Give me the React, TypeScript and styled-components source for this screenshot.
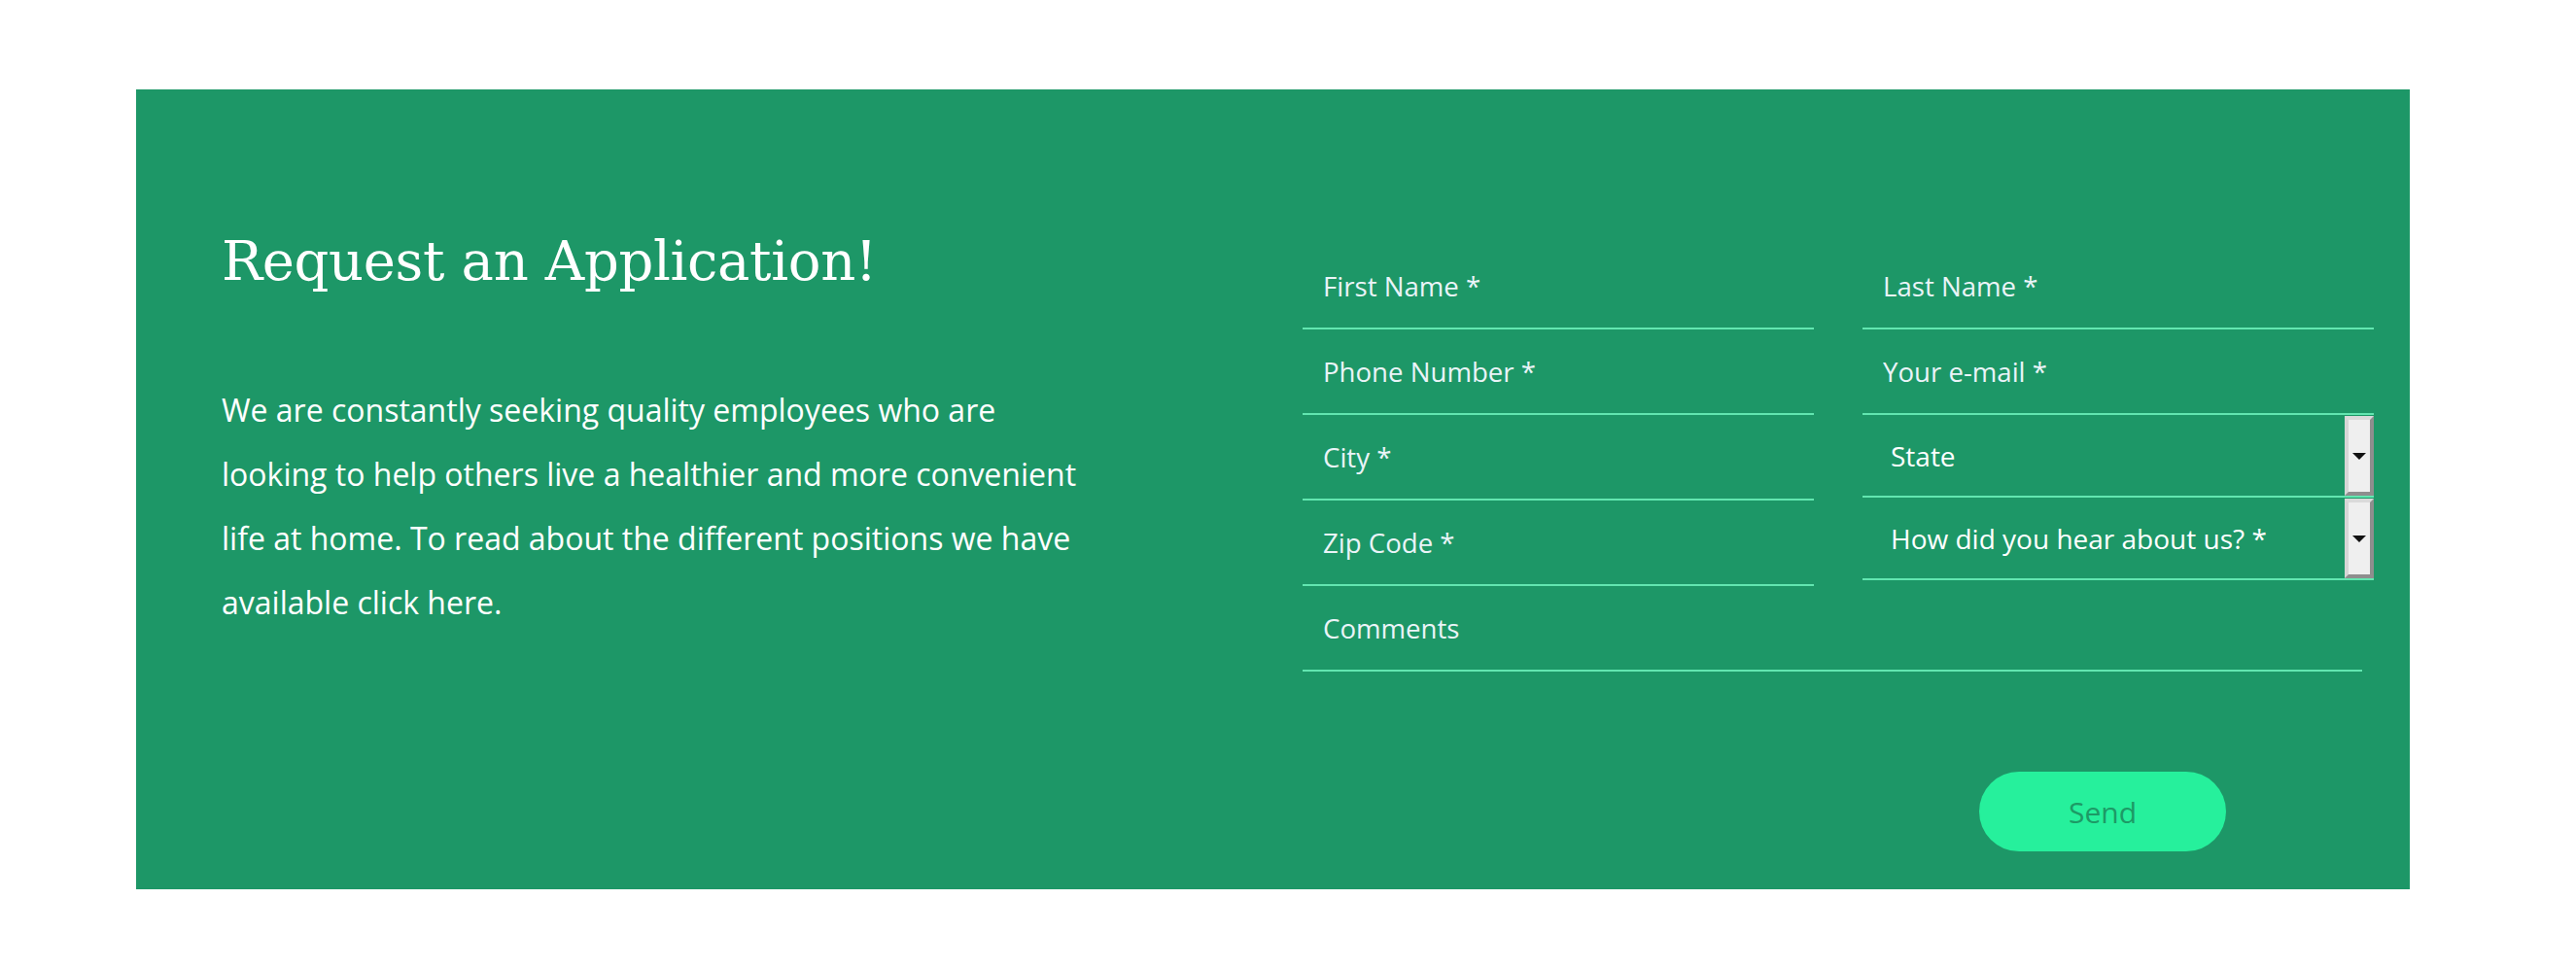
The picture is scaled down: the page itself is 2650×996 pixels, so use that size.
import styled, { createGlobalStyle } from 'styled-components'

const GlobalStyle = createGlobalStyle`
  body {
    margin: 0;
    background: #ffffff;
    font-family: "Open Sans", "Liberation Sans", sans-serif;
  }
`

const Page = styled.div`
  padding: 92px 0 0 140px;
`

const Panel = styled.section`
  width: 2339px;
  height: 823px;
  box-sizing: border-box;
  background: #1d9767;
  display: flex;
  padding: 0 37px 0 88px;
`

const Intro = styled.div`
  flex: 0 0 1112px;
  padding-top: 149px;
`

const Heading = styled.h2`
  margin: 0;
  font-family: "DejaVu Serif", "Liberation Serif", serif;
  font-weight: 400;
  font-size: 56px;
  line-height: 1;
  letter-spacing: -0.35px;
  color: #ffffff;
`

const Text = styled.p`
  margin: 92px 0 0;
  max-width: 905px;
  font-size: 32px;
  line-height: 66px;
  color: #ffffff;
`

const Form = styled.form`
  flex: 0 0 1102px;
  padding-top: 159px;
  display: flex;
  flex-direction: column;
`

const Columns = styled.div`
  display: grid;
  grid-template-columns: 526px 526px;
  column-gap: 50px;
  align-items: start;
`

const Column = styled.div`
  display: flex;
  flex-direction: column;
`

const Field = styled.input<{ $wide?: boolean }>`
  box-sizing: border-box;
  width: ${p => (p.$wide ? '1090px' : '100%')};
  height: 88px;
  padding: 0 0 0 21px;
  background: transparent;
  border: none;
  border-bottom: 2px solid #62e6b0;
  font-family: "Open Sans", "Liberation Sans", sans-serif;
  font-size: 27.6px;
  color: #ffffff;
  outline: none;
  &::placeholder {
    color: #eaf4f8;
    opacity: 1;
  }
`

const SelectRow = styled.div`
  display: flex;
  height: 85px;
  box-sizing: border-box;
  border-bottom: 2px solid #62e6b0;
`

const Select = styled.select`
  flex: 1;
  appearance: none;
  background: transparent;
  border: none;
  padding: 0 0 0 29px;
  font-family: "Open Sans", "Liberation Sans", sans-serif;
  font-size: 28px;
  color: #ffffff;
  outline: none;
  option {
    color: #222;
  }
`

const ArrowButton = styled.span`
  flex: 0 0 30px;
  box-sizing: border-box;
  margin-top: 1px;
  background: #efefef;
  border-style: solid;
  border-width: 4px;
  border-color: #dadada #8e8e8e #8e8e8e #d6d6d6;
  display: flex;
  align-items: center;
  justify-content: center;
  &::after {
    content: '';
    border-left: 7px solid transparent;
    border-right: 7px solid transparent;
    border-top: 7px solid #111;
  }
`

const Actions = styled.div`
  display: flex;
  justify-content: flex-end;
  padding: 103px 152px 0 0;
`

const SendButton = styled.button`
  width: 254px;
  height: 82px;
  border: none;
  border-radius: 41px;
  background: #26f09c;
  color: #1d9a66;
  font-family: "Open Sans", "Liberation Sans", sans-serif;
  font-size: 30px;
  cursor: pointer;
`

const App = () => {
  return (
    <Page>
      <GlobalStyle />
      <Panel>
        <Intro>
          <Heading>Request an Application!</Heading>
          <Text>
            We are constantly seeking quality employees who are looking to help others live a healthier
            and more convenient life at home. To read about the different positions we have available
            click here.
          </Text>
        </Intro>
        <Form onSubmit={e => e.preventDefault()}>
          <Columns>
            <Column>
              <Field placeholder="First Name *" />
              <Field placeholder="Phone Number *" />
              <Field placeholder="City *" />
              <Field placeholder="Zip Code *" />
            </Column>
            <Column>
              <Field placeholder="Last Name *" />
              <Field placeholder="Your e-mail *" />
              <SelectRow>
                <Select defaultValue="">
                  <option value="">State</option>
                </Select>
                <ArrowButton />
              </SelectRow>
              <SelectRow>
                <Select defaultValue="">
                  <option value="">How did you hear about us? *</option>
                </Select>
                <ArrowButton />
              </SelectRow>
            </Column>
          </Columns>
          <Field $wide placeholder="Comments" />
          <Actions>
            <SendButton type="submit">Send</SendButton>
          </Actions>
        </Form>
      </Panel>
    </Page>
  )
}

export default App
